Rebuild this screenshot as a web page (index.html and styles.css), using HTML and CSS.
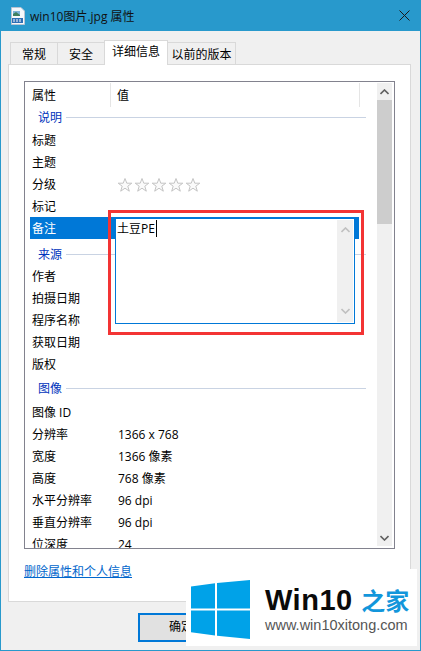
FILE: index.html
```html
<!DOCTYPE html>
<html lang="zh-CN">
<head>
  <meta charset="UTF-8" />
  <title>win10图片.jpg 属性</title>
  <link rel="stylesheet" href="styles.css">
</head>
<body>
  <div class="window">
    <div class="titlebar">
      <svg class="file-icon" width="16" height="18" viewBox="0 0 16 18">
        <path d="M1.5 .5H11L14.5 4V17.5H1.5Z" fill="#f6f8fb" stroke="#b9c4d2"/>
        <path d="M3 4H10V9H3Z" fill="#7fb2d8"/>
        <path d="M3 7L6 5L10 8V9H3Z" fill="#3f7f5f"/>
        <path d="M2 11H13V16H2Z" fill="#2f6fb5"/>
        <path d="M4 12V15M7 12V15M10 12V15" stroke="#fff"/>
      </svg>
      <span class="title">win10图片.jpg 属性</span>
      <svg class="close" width="11" height="11" viewBox="0 0 11 11">
        <path d="M.5 .5L10.500 10.500M10.500 .5L.5 10.500" stroke="#1a1a1a" fill="none"/>
      </svg>
    </div>

    <div class="content">
      <div class="tabs">
        <div class="tab tab-first">常规</div>
        <div class="tab tab-mid">安全</div>
        <div class="tab active">详细信息</div>
        <div class="tab tab-last">以前的版本</div>
      </div>

      <div class="panel">
        <div class="listbox">
          <div class="list">
            <div class="header">
              <div class="col-name">属性</div>
              <div class="col-value">值</div>
            </div>

            <div class="group group-first"><span>说明</span><i></i></div>
            <div class="row"><div class="name">标题</div></div>
            <div class="row"><div class="name">主题</div></div>
            <div class="row">
              <div class="name">分级</div>
              <div class="value stars">
                <svg width="16" height="16" viewBox="0 0 16 16"><path class="star" d="M8 1.5L9.8 6.2H14.8L10.8 9.2L12.3 14.2L8 11.2L3.7 14.2L5.2 9.2L1.2 6.2H6.2Z"/></svg>
                <svg width="16" height="16" viewBox="0 0 16 16"><path class="star" d="M8 1.5L9.8 6.2H14.8L10.8 9.2L12.3 14.2L8 11.2L3.7 14.2L5.2 9.2L1.2 6.2H6.2Z"/></svg>
                <svg width="16" height="16" viewBox="0 0 16 16"><path class="star" d="M8 1.5L9.8 6.2H14.8L10.8 9.2L12.3 14.2L8 11.2L3.7 14.2L5.2 9.2L1.2 6.2H6.2Z"/></svg>
                <svg width="16" height="16" viewBox="0 0 16 16"><path class="star" d="M8 1.5L9.8 6.2H14.8L10.8 9.2L12.3 14.2L8 11.2L3.7 14.2L5.2 9.2L1.2 6.2H6.2Z"/></svg>
                <svg width="16" height="16" viewBox="0 0 16 16"><path class="star" d="M8 1.5L9.8 6.2H14.8L10.8 9.2L12.3 14.2L8 11.2L3.7 14.2L5.2 9.2L1.2 6.2H6.2Z"/></svg>
              </div>
            </div>
            <div class="row"><div class="name">标记</div></div>
            <div class="row selected"><div class="name">备注</div></div>

            <div class="group group-source"><span>来源</span><i></i></div>
            <div class="row"><div class="name">作者</div></div>
            <div class="row"><div class="name">拍摄日期</div></div>
            <div class="row"><div class="name">程序名称</div></div>
            <div class="row"><div class="name">获取日期</div></div>
            <div class="row"><div class="name">版权</div></div>

            <div class="group group-image"><span>图像</span><i></i></div>
            <div class="row"><div class="name">图像 ID</div></div>
            <div class="row"><div class="name">分辨率</div><div class="value">1366 x 768</div></div>
            <div class="row"><div class="name">宽度</div><div class="value">1366 像素</div></div>
            <div class="row"><div class="name">高度</div><div class="value">768 像素</div></div>
            <div class="row"><div class="name">水平分辨率</div><div class="value">96 dpi</div></div>
            <div class="row"><div class="name">垂直分辨率</div><div class="value">96 dpi</div></div>
            <div class="row"><div class="name">位深度</div><div class="value">24</div></div>
          </div>

          <div class="scrollbar">
            <div class="arrow">
              <svg width="9" height="6" viewBox="0 0 9 6"><path d="M.5 5L4.5 1L8.5 5" fill="none" stroke="#606060" stroke-width="1.6"/></svg>
            </div>
            <div class="track"><div class="thumb"></div></div>
            <div class="arrow">
              <svg width="9" height="6" viewBox="0 0 9 6"><path d="M.5 1L4.5 5L8.5 1" fill="none" stroke="#606060" stroke-width="1.6"/></svg>
            </div>
          </div>
        </div>

        <a class="remove-link" href="#">删除属性和个人信息</a>
      </div>

      <div class="buttons">
        <div class="btn btn-default">确定</div>
      </div>
    </div>

    <!-- cuadro de edición abierto sobre la fila seleccionada -->
    <div class="editor">
      <div class="editor-text">土豆PE<span class="caret"></span></div>
      <div class="editor-scroll">
        <svg width="9" height="6" viewBox="0 0 9 6"><path d="M.5 5L4.5 1L8.5 5" fill="none" stroke="#c0c0c0" stroke-width="1.6"/></svg>
        <svg width="9" height="6" viewBox="0 0 9 6"><path d="M.5 1L4.5 5L8.5 1" fill="none" stroke="#c0c0c0" stroke-width="1.6"/></svg>
      </div>
    </div>
    <div class="highlight"></div>

    <div class="watermark">
      <svg class="win-logo" width="60" height="60" viewBox="0 0 60 60">
        <path d="M0 6.500L24 3.200V28.500H0Z" fill="#00a2e8"/>
        <path d="M26 2.900L59 0V28.500H26Z" fill="#00a2e8"/>
        <path d="M0 30.500H24V55.500L0 52.200Z" fill="#00a2e8"/>
        <path d="M26 30.500H59V59L26 55.800Z" fill="#00a2e8"/>
      </svg>
      <div class="brand">
        <div class="brand-name">Win10 <span>之家</span></div>
        <div class="brand-url">www.win10xitong.com</div>
      </div>
    </div>
  </div>
</body>
</html>
```

FILE: styles.css
```css
* {
  box-sizing: border-box;
}

html, body {
  margin: 0;
  padding: 0;
}

body {
  width: 421px;
  height: 651px;
  overflow: hidden;
  font-family: "Open Sans", "Noto Sans CJK SC", sans-serif;
  font-size: 12px;
  color: #000;
}

.window {
  position: relative;
  width: 421px;
  height: 651px;
  display: flex;
  flex-direction: column;
  background-color: #f0f0f0;
  border: 1px solid #2899cc;
  border-top: none;
  overflow: hidden;
}

.titlebar {
  height: 31px;
  margin: 0 -1px;
  padding: 0 9px 0 10px;
  display: flex;
  align-items: center;
  flex-shrink: 0;
  background-color: #2899cc;
}

.file-icon {
  margin-right: 4px;
  flex-shrink: 0;
}

.title {
  flex: 1;
  font-size: 12px;
  color: #111;
}

.close {
  margin-right: 2px;
}

.content {
  flex: 1;
  padding: 11px 9px 0 7px;
  display: flex;
  flex-direction: column;
}

.tabs {
  display: flex;
  align-items: flex-start;
  height: 23px;
  padding-left: 2px;
  position: relative;
  z-index: 1;
  margin-bottom: -1px;
}

.tab {
  height: 22px;
  padding-top: 3px;
  text-align: center;
  background-color: #f0f0f0;
  border: 1px solid #d9d9d9;
  border-bottom: none;
  margin-right: -1px;
  line-height: 18px;
}

.tab-first {
  width: 48px;
}

.tab-mid {
  width: 48px;
}

.tab-last {
  width: 69px;
  white-space: nowrap;
}

.tab.active {
  width: 64px;
  height: 25px;
  margin-top: -2px;
  padding-top: 2px;
  background-color: #fff;
  position: relative;
  z-index: 1;
}

.panel {
  width: 403px;
  height: 538px;
  padding: 16px 15px 0 15px;
  background-color: #fff;
  border: 1px solid #d9d9d9;
}

.listbox {
  width: 371px;
  height: 468px;
  display: flex;
  border: 1px solid #82828e;
  background-color: #fff;
  overflow: hidden;
}

.list {
  flex: 1;
  min-width: 0;
  overflow: hidden;
}

.header {
  height: 24px;
  display: flex;
  margin-top: 1px;
  line-height: 26px;
}

.col-name {
  width: 86px;
  padding-left: 7px;
  border-right: 1px solid #e5e5e5;
}

.col-value {
  width: 249px;
  padding-left: 6px;
  border-right: 1px solid #e5e5e5;
}

.group {
  height: 24px;
  padding-left: 13px;
  display: flex;
  align-items: center;
  color: #0033bc;
}

.group-first {
  height: 22px;
  padding-bottom: 2px;
}

.group-source {
  height: 26px;
  padding-top: 4px;
}

.group-image {
  height: 26px;
}

.group span {
  margin-right: 4px;
}

.group i {
  width: 300px;
  height: 1px;
  background-color: #c9d3e3;
}

.row {
  height: 22px;
  width: 329px;
  margin-left: 5px;
  padding-top: 2px;
  display: flex;
  align-items: center;
  line-height: 20px;
  white-space: nowrap;
}

.row .name {
  width: 88px;
  padding-left: 2px;
}

.row.selected {
  background-color: #0078d7;
  color: #fff;
}

.stars {
  display: flex;
  margin-left: -1px;
  gap: 1px;
}

.star {
  fill: #fafafa;
  stroke: #c4c4c4;
}

.scrollbar {
  width: 15px;
  margin: 1px 2px 2px 0;
  display: flex;
  flex-direction: column;
  flex-shrink: 0;
  background-color: #f0f0f0;
}

.arrow {
  height: 17px;
  display: flex;
  align-items: center;
  justify-content: center;
  flex-shrink: 0;
}

.track {
  flex: 1;
}

.thumb {
  height: 124px;
  background-color: #cdcdcd;
}

.remove-link {
  display: block;
  margin-top: 14px;
  color: #0066cc;
  text-decoration: underline;
  line-height: 18px;
}

.buttons {
  display: flex;
  padding: 11px 0 0 130px;
}

.btn {
  width: 86px;
  height: 29px;
  text-align: center;
  line-height: 23px;
  background-color: #e1e1e1;
  border: 2px solid #0078d7;
}

.editor {
  position: absolute;
  left: 114px;
  top: 218px;
  width: 240px;
  height: 106px;
  display: flex;
  background-color: #fff;
  border: 1px solid #0078d7;
  padding: 1px;
}

.editor-text {
  flex: 1;
  line-height: 18px;
  font-size: 12px;
}

.caret {
  display: inline-block;
  width: 1px;
  height: 17px;
  margin-left: 1px;
  vertical-align: top;
  background-color: #000;
}

.editor-scroll {
  width: 16px;
  display: flex;
  flex-direction: column;
  justify-content: space-between;
  align-items: center;
  padding: 7px 0 8px;
  background-color: #f0f0f0;
}

.highlight {
  position: absolute;
  left: 107px;
  top: 210px;
  width: 256px;
  height: 125px;
  border: 3px solid #f33434;
}

.watermark {
  position: absolute;
  left: 185px;
  top: 569px;
  width: 231px;
  height: 77px;
  display: flex;
  padding: 11px 0 0 5px;
  background-color: #fff;
}

.win-logo {
  flex-shrink: 0;
}

.brand {
  margin-left: 14px;
}

.brand-name {
  margin-top: 5px;
  font-family: "Liberation Sans", sans-serif;
  font-weight: bold;
  font-size: 29px;
  letter-spacing: .5px;
  line-height: 30px;
  color: #0a0a0a;
  white-space: nowrap;
}

.brand-name span {
  font-family: "Noto Sans CJK SC", sans-serif;
  font-size: 24px;
  letter-spacing: 0;
  color: #1296db;
}

.brand-url {
  margin-top: 2px;
  font-family: "Liberation Sans", sans-serif;
  font-size: 14.500px;
  line-height: 17px;
  color: #555;
  white-space: nowrap;
}
```
